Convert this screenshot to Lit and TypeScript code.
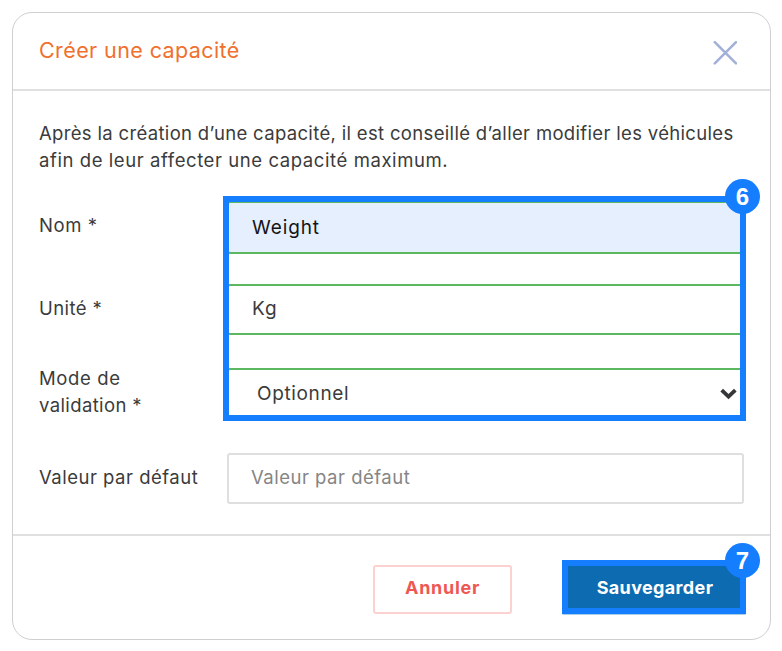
import { LitElement, html, css } from "lit";
import { customElement } from "lit/decorators.js";

@customElement("app-root")
export class AppRoot extends LitElement {
  static styles = css`
    :host {
      display: block;
      width: 782px;
      height: 651px;
      box-sizing: border-box;
      padding: 12px 11px 11px 12px;
      background: #fff;
      color: #3b3b3b;
      font: 400 18.5px/27px Inter, "Open Sans", sans-serif;
      position: relative;
      overflow: hidden;
    }
    * { box-sizing: border-box; }
    .dialog {
      height: 628px;
      border: 1px solid #cfcfcf;
      border-radius: 20px;
      display: flex;
      flex-direction: column;
    }
    header {
      flex: none;
      height: 78px;
      border-bottom: 2px solid #e0e0e0;
      padding: 0 33px 0 26px;
      display: flex;
      justify-content: space-between;
      align-items: center;
    }
    h1 {
      margin: -2px 0 0;
      font-size: 21.5px;
      font-weight: 400;
      letter-spacing: 0.4px;
      color: #f0702d;
    }
    .close {
      display: block;
      width: 24px;
      height: 24px;
      margin-top: 4px;
    }
    main {
      flex: none;
      height: 445px;
      padding: 29px 26px 0;
      border-bottom: 2px solid #e0e0e0;
    }
    p { margin: 0; white-space: nowrap; }
    .intro1 { letter-spacing: 0.33px; }
    .intro2 { letter-spacing: 0.58px; }
    .form {
      margin-top: 27px;
      display: grid;
      grid-template-columns: 188px 517px;
      grid-template-rows: 83px 84px 85px 51px;
    }
    .label { padding-top: 11px; }
    .nom { letter-spacing: 0.6px; }
    .unite { letter-spacing: 0.4px; }
    .mode { padding-top: 0; margin-top: -3px; letter-spacing: 0.65px; }
    .valid { letter-spacing: 0.38px; }
    .default { letter-spacing: 0.5px; }
    .field {
      height: 51px;
      border: 2px solid #5cb860;
      border-radius: 3px;
      padding: 0 23px;
      line-height: 46px;
      background: #fff;
      white-space: nowrap;
    }
    .filled {
      height: 53px;
      background: #e6effe;
      color: #151515;
      font-size: 19px;
      letter-spacing: 0.9px;
      line-height: 49px;
    }
    .unit { font-size: 19px; letter-spacing: 1px; line-height: 46px; }
    .select {
      padding: 0 5px 0 28px;
      font-size: 19px;
      letter-spacing: 0.65px;
      display: flex;
      justify-content: space-between;
      align-items: center;
    }
    .select span { margin-top: 1px; }
    .select svg { display: block; width: 17px; height: 12px; }
    .empty {
      border-color: #dfdfdf;
      color: #858585;
      padding-left: 22px;
      line-height: 44px;
      letter-spacing: 0.5px;
    }
    footer {
      flex: 1;
      display: flex;
      justify-content: flex-end;
      align-items: flex-start;
      padding: 24px 24px 0 0;
      font-size: 18px;
      font-weight: 700;
      text-align: center;
    }
    .cancel {
      width: 139px;
      height: 49px;
      margin-top: 5px;
      margin-right: 50px;
      border: 2px solid #fbd2cf;
      border-radius: 3px;
      color: #ef5753;
      line-height: 42px;
      letter-spacing: 0.72px;
    }
    .save {
      position: relative;
      width: 184px;
      height: 54px;
      border: 6px solid #147efe;
      padding-left: 2px;
      background: #0c6bb1;
      box-shadow: 0 1px 0 -0.5px #5b9ccd;
      color: #fff;
      line-height: 43px;
      letter-spacing: 0.36px;
    }
    .frame {
      position: absolute;
      left: 223px;
      top: 196px;
      width: 523px;
      height: 225px;
      border: 6px solid #147efe;
    }
    .badge {
      position: absolute;
      width: 35px;
      height: 35px;
      border-radius: 50%;
      background: #147efe;
      color: #fff;
      font: 700 24px/35px "Liberation Sans", Arial, sans-serif;
      letter-spacing: 0;
      text-align: center;
    }
    .six { right: -20px; top: -23px; }
    .seven { right: -20px; top: -23px; }
  `;

  render() {
    return html`
      <div class="dialog">
        <header>
          <h1>Créer une capacité</h1>
          <svg class="close" viewBox="0 0 24 24" fill="none" stroke="#a2afd8" stroke-width="2.5" stroke-linecap="round">
            <path d="M1.8 1.2 23 22.4M23 1.2 1.8 22.4" />
          </svg>
        </header>
        <main>
          <p class="intro1">Après la création d’une capacité, il est conseillé d’aller modifier les véhicules</p>
          <p class="intro2">afin de leur affecter une capacité maximum.</p>
          <div class="form">
            <div class="label nom">Nom *</div>
            <div class="field filled">Weight</div>
            <div class="label unite">Unité *</div>
            <div class="field unit">Kg</div>
            <div class="label mode">Mode de<br /><span class="valid">validation *</span></div>
            <div class="field select">
              <span>Optionnel</span>
              <svg viewBox="0 0 17 12" fill="none" stroke="#343638" stroke-width="3.8">
                <path d="M1.7 2.2 8.5 8.7 15.3 2.2" />
              </svg>
            </div>
            <div class="label default">Valeur par défaut</div>
            <div class="field empty">Valeur par défaut</div>
          </div>
        </main>
        <footer>
          <div class="cancel">Annuler</div>
          <div class="save">Sauvegarder<span class="badge seven">7</span></div>
        </footer>
      </div>
      <div class="frame"><span class="badge six">6</span></div>
    `;
  }
}
